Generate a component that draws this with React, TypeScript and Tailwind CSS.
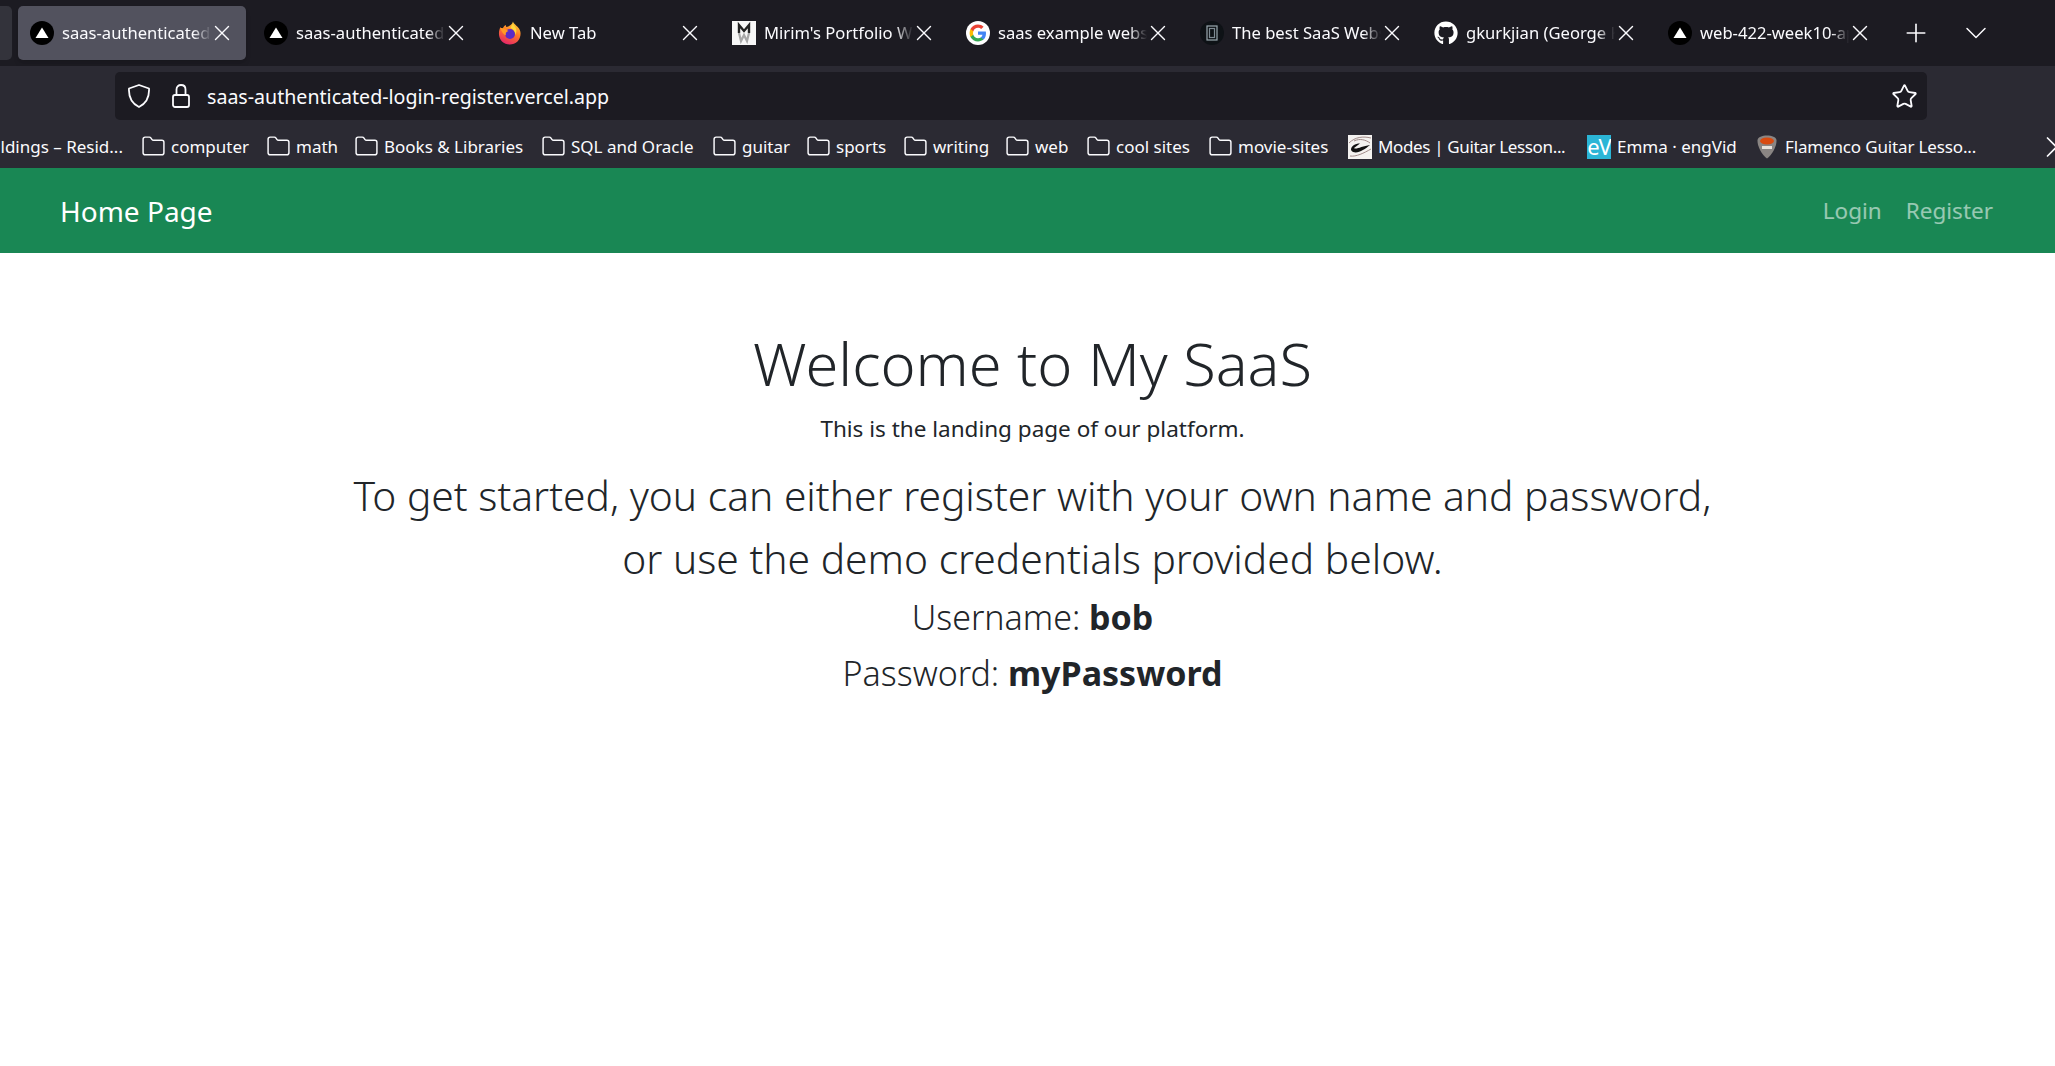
import { ReactNode } from 'react';
import { FaGithub } from 'react-icons/fa';
import { X, Plus, ChevronDown, ChevronRight, Star, Folder } from 'lucide-react';

const VercelIcon = () => (
  <svg viewBox="0 0 24 24" className="w-6 h-6 shrink-0">
    <circle cx="12" cy="12" r="12" fill="#000" />
    <path d="M12 6.5 L18.5 17 H5.5 Z" fill="#fff" />
  </svg>
);

const FirefoxIcon = () => (
  <svg viewBox="0 0 24 24" className="w-6 h-6 shrink-0">
    <defs>
      <linearGradient id="ffBody" x1="0.7" y1="0" x2="0.3" y2="1">
        <stop offset="0" stopColor="#ffd23a" />
        <stop offset="0.45" stopColor="#ff7a26" />
        <stop offset="1" stopColor="#e3216b" />
      </linearGradient>
    </defs>
    <path d="M15 0.5 C15.5 3 19 4.5 21 7.5 C23.5 11 23 17 19.5 20.5 C15.5 24.5 8 24.5 4 20.5 C0.5 17 0 11 2.5 6 C3 7 3.5 7.5 4.5 8 C5.5 5.5 6.5 4.5 8 4 C7.8 5 8 5.5 8.5 6 C11 5.5 14 4 15 0.5 Z" fill="url(#ffBody)" />
    <circle cx="12" cy="13" r="5" fill="#5b2bc7" />
    <path d="M2.5 7 C5 6.5 8 8 10.5 10 C8 10.5 7.2 12.5 8 14.500 C5.5 13.5 3.2 10.5 2.5 7 Z" fill="#ff9a24" />
    <path d="M14.5 3 C18 5.500 19.500 9.500 17.500 14 C17 10 15.5 8 12.500 7 Z" fill="#ffd83d" />
  </svg>
);

const PortfolioIcon = () => (
  <svg viewBox="0 0 24 24" className="w-6 h-6 shrink-0">
    <rect width="24" height="24" fill="#f7f7f7" />
    <path d="M7 12 V4 L12 10 L17 4 V12" fill="none" stroke="#222" strokeWidth="2.4" />
    <path d="M7 12 L9 20 L12 14 L15 20 L17 12" fill="none" stroke="#a8a8a8" strokeWidth="2.2" />
  </svg>
);

const GoogleIcon = () => (
  <svg viewBox="0 0 24 24" className="w-6 h-6 shrink-0">
    <circle cx="12" cy="12" r="12" fill="#fff" />
    <path d="M20 12.2 C20 11.6 19.9 11 19.8 10.4 H12 V13.8 H16.5 C16.3 14.9 15.7 15.8 14.8 16.4 V18.6 H17.5 C19.1 17.1 20 14.9 20 12.2 Z" fill="#4285f4" />
    <path d="M12 20.5 C14.3 20.5 16.1 19.7 17.5 18.6 L14.8 16.4 C14 16.9 13.1 17.2 12 17.2 C9.800 17.200 8 15.700 7.300 13.700 H4.500 V16 C5.900 18.700 8.700 20.500 12 20.500 Z" fill="#34a853" />
    <path d="M7.300 13.700 C6.900 12.600 6.900 11.400 7.300 10.300 V8 H4.500 C3.300 10.300 3.300 13.700 4.500 16 Z" fill="#fbbc05" />
    <path d="M12 6.800 C13.200 6.800 14.300 7.200 15.200 8.100 L17.600 5.700 C16.100 4.300 14.200 3.500 12 3.500 C8.700 3.500 5.900 5.300 4.500 8 L7.300 10.300 C8 8.300 9.800 6.800 12 6.800 Z" fill="#ea4335" />
  </svg>
);

const PhoneIcon = () => (
  <svg viewBox="0 0 24 24" className="w-6 h-6 shrink-0">
    <circle cx="12" cy="12" r="12" fill="#0e1216" />
    <rect x="7" y="5" width="10" height="14" fill="none" stroke="#9aa8b0" strokeWidth="1.2" />
    <rect x="9.500" y="7.500" width="5" height="9" fill="none" stroke="#7d8a92" strokeWidth="1.2" />
  </svg>
);

const GithubIcon = () => <FaGithub className="w-6 h-6 shrink-0 text-white" />;

const ModesIcon = () => (
  <svg viewBox="0 0 24 24" className="w-6 h-6 shrink-0">
    <rect width="24" height="24" fill="#f4f2f0" />
    <path d="M1 8 C7 2 15 1 23 3 M2 21 C8 22 16 18 23 14 M6 6 C12 3 18 5 22 8" fill="none" stroke="#a08a88" strokeWidth="1" />
    <path d="M3 15 C3 11 7 8.500 12 8.500 L6 13 C8 15 14 11 22 10 C16 15 7 21 3 15 Z" fill="#111" />
  </svg>
);

const EngVidIcon = () => (
  <span className="w-6 h-6 shrink-0 bg-[#2bb5d6] text-white text-[22px] leading-[22px] text-center overflow-hidden tracking-tighter">eV</span>
);

const FlamencoIcon = () => (
  <svg viewBox="0 0 24 24" className="w-6 h-6 shrink-0">
    <path d="M12 0.500 C17 0.500 21 2 21.500 5 C22 11 17 20 12 23.500 C7 20 2 11 2.500 5 C3 2 7 0.500 12 0.500 Z" fill="#8a8583" />
    <ellipse cx="12" cy="6" rx="7" ry="3.500" fill="#d94a10" />
    <rect x="7" y="11" width="10" height="3" fill="#e8e2dc" />
  </svg>
);

const tabs: { title: string; icon: ReactNode; active?: boolean }[] = [
  { title: 'saas-authenticated-login', icon: <VercelIcon />, active: true },
  { title: 'saas-authenticated-login', icon: <VercelIcon /> },
  { title: 'New Tab', icon: <FirefoxIcon /> },
  { title: "Mirim's Portfolio Website", icon: <PortfolioIcon /> },
  { title: 'saas example website', icon: <GoogleIcon /> },
  { title: 'The best SaaS Website', icon: <PhoneIcon /> },
  { title: 'gkurkjian (George Kurkjian)', icon: <GithubIcon /> },
  { title: 'web-422-week10-app', icon: <VercelIcon /> },
];

const folders = [
  { label: 'computer', width: 'w-[77px]' },
  { label: 'math', width: 'w-[40px]' },
  { label: 'Books & Libraries', width: 'w-[139px]' },
  { label: 'SQL and Oracle', width: 'w-[123px]' },
  { label: 'guitar', width: 'w-[46px]' },
  { label: 'sports', width: 'w-[49px]' },
  { label: 'writing', width: 'w-[54px]' },
  { label: 'web', width: 'w-[33px]' },
  { label: 'cool sites', width: 'w-[74px]' },
  { label: 'movie-sites', width: 'w-[91px]' },
];

const sites = [
  { label: 'Modes | Guitar Lesson...', width: 'w-[190px] tracking-[-0.35px]', icon: <ModesIcon /> },
  { label: 'Emma · engVid', width: 'w-[119px]', icon: <EngVidIcon /> },
  { label: 'Flamenco Guitar Lesso...', width: 'w-[191px] tracking-[-0.15px]', icon: <FlamencoIcon /> },
];

function TabStrip() {
  return (
    <div className="h-[66px] bg-[#1c1b22] flex items-start pt-[6px] gap-[6px] overflow-hidden">
      <div className="w-[12px] h-[54px] bg-[#33333b] rounded-r-[5px] shrink-0" />
      {tabs.map((tab, i) => (
        <div key={i} className={`w-[228px] h-[54px] shrink-0 flex items-center pl-[12px] gap-[8px] rounded-[5px] ${tab.active ? 'bg-[#52525e] shadow-md' : ''}`}>
          {tab.icon}
          <span className="w-[149px] text-[16.6px] text-[#fbfbfe] whitespace-nowrap overflow-hidden [mask-image:linear-gradient(to_right,black_88%,transparent)]">{tab.title}</span>
          <X size={26} strokeWidth={1.3} className="text-[#fbfbfe] shrink-0 -ml-[10px]" />
        </div>
      ))}
      <div className="flex items-center h-[54px] ml-[11px] gap-[27px]">
        <Plus size={30} strokeWidth={1.3} className="text-[#fbfbfe]" />
        <ChevronDown size={36} strokeWidth={1} className="text-[#fbfbfe]" />
      </div>
    </div>
  );
}

function UrlBar() {
  return (
    <div className="h-[54px] bg-[#2b2a33] pt-[6px] pl-[115px]">
      <div className="w-[1812px] h-[48px] bg-[#1c1b22] rounded-[5px] flex items-center pl-[13px] pr-[8px]">
        <svg viewBox="0 0 22 24" className="w-[22px] h-6 shrink-0" fill="none" stroke="#fbfbfe" strokeWidth="1.8" strokeLinejoin="round">
          <path d="M11 1 L21 4.500 C21.500 13 18 19.500 11 23 C4 19.500 0.500 13 1 4.500 Z" />
        </svg>
        <svg viewBox="0 0 18 24" className="w-[18px] h-6 shrink-0 ml-[22px]" fill="none" stroke="#fbfbfe" strokeWidth="1.8">
          <path d="M4.500 11 V5.500 C4.500 2.500 6.500 1 9 1 C11.500 1 13.500 2.500 13.500 5.500 V11" />
          <rect x="1" y="11" width="16" height="12" rx="2" />
        </svg>
        <span className="ml-[17px] pt-px text-[19.6px] text-[#fbfbfe] whitespace-nowrap">saas-authenticated-login-register.vercel.app</span>
        <Star size={27} strokeWidth={1.6} className="text-[#fbfbfe] ml-auto mr-px" />
      </div>
    </div>
  );
}

function Bookmarks() {
  return (
    <div className="h-[48px] bg-[#2b2a33] flex items-center pt-[5px] overflow-hidden text-[17px] text-[#fbfbfe] whitespace-nowrap">
      <span className="w-[123px] shrink-0 overflow-hidden flex justify-end">ldings – Resid...</span>
      <div className="flex items-center gap-[19px] ml-[19px] shrink-0">
        {folders.map((f) => (
          <div key={f.label} className="flex items-center gap-[6px]">
            <Folder size={25} strokeWidth={1.4} className="text-[#fbfbfe] shrink-0 -mx-px" />
            <span className={f.width}>{f.label}</span>
          </div>
        ))}
        {sites.map((s) => (
          <div key={s.label} className="flex items-center gap-[6px]">
            {s.icon}
            <span className={s.width}>{s.label}</span>
          </div>
        ))}
      </div>
      <ChevronRight size={36} strokeWidth={1.1} className="text-[#fbfbfe] shrink-0 ml-auto -mr-[15px]" />
    </div>
  );
}

function NavBar() {
  return (
    <nav className="h-[85px] bg-[#198754] flex items-center justify-between pl-[60px] pr-[62px]">
      <a className="text-[28px] text-white">Home Page</a>
      <div className="flex gap-[24px] pt-px text-[22.5px] text-white/55">
        <a>Login</a>
        <a>Register</a>
      </div>
    </nav>
  );
}

export default function App() {
  return (
    <div className="min-h-[1066px] bg-white font-['Noto_Sans',sans-serif] overflow-hidden">
      <TabStrip />
      <UrlBar />
      <Bookmarks />
      <NavBar />
      <main className="flex flex-col items-center text-center text-[#212529] pl-[10px] pt-[70px]">
        <h1 className="text-[59.5px] leading-[80px] font-light">Welcome to My SaaS</h1>
        <p className="mt-[10px] text-[22.5px] leading-[32px]">This is the landing page of our platform.</p>
        <p className="mt-[19px] text-[40.75px] leading-[63px] font-light">
          To get started, you can either register with your own name and password,
          <br />
          or use the demo credentials provided below.
        </p>
        <p className="-mt-px text-[34px] leading-[56px] font-light">
          Username: <b className="font-bold">bob</b>
        </p>
        <p className="text-[34px] leading-[56px] font-light">
          Password: <b className="font-bold">myPassword</b>
        </p>
      </main>
    </div>
  );
}
